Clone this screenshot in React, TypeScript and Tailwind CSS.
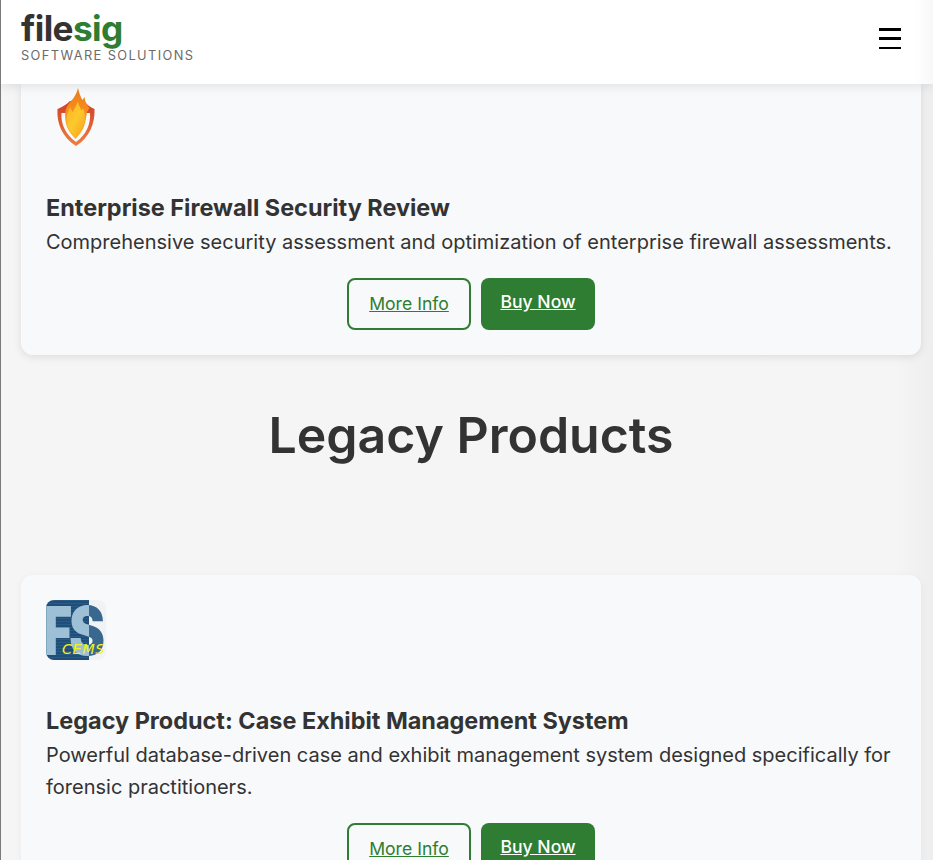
const font = { fontFamily: 'Inter, "Liberation Sans", sans-serif' };

function FlameShield() {
    return (
        <svg width="60" height="60" viewBox="0 0 60 60" className="block">
            <defs>
                <linearGradient id="flame" x1="0" y1="0" x2="0" y2="1">
                    <stop offset="0" stopColor="#ee7d1d" />
                    <stop offset="0.5" stopColor="#f58f1e" />
                    <stop offset="1" stopColor="#fbb321" />
                </linearGradient>
                <linearGradient id="core" x1="0" y1="0" x2="1" y2="1">
                    <stop offset="0" stopColor="#fbb024" />
                    <stop offset="0.5" stopColor="#fdc92c" />
                    <stop offset="1" stopColor="#f8a01f" />
                </linearGradient>
                <linearGradient id="rim" x1="0" y1="0" x2="0" y2="1">
                    <stop offset="0" stopColor="#cf3d28" />
                    <stop offset="1" stopColor="#ef7f3e" />
                </linearGradient>
            </defs>
            <path d="M11.500 22 C16 20 20 18 24 14 L38 14 C41 18 45 20.500 48.500 22 C49 36 44 50 30 59 C16 50 10.500 36 11.500 22 Z" fill="url(#rim)" />
            <path d="M15.500 26 L44 26 C45 37 40 48 30 55 C20 48 14.500 37 15.500 26 Z" fill="#f8f9fa" />
            <path d="M32 1 C33 5 34 9 36.500 13 L38.500 10 C39 15 41 18 43.500 21 L41 25 L39.500 34 C38 42 34 47 29.500 52 C25 47 20 41 19.500 33 C19 29 19 25 20 22 C21 19 23 16 25 14 C28 11 31 6 32 1 Z" fill="url(#flame)" />
            <path d="M32 14 C32 18 35 21 35.500 24 L37 21 C39 26 39.500 30 39 33 C38 40 34 46 29.500 50 C25 46 20.500 40 20.500 33 C20.500 28 22 24 24.500 20 C25 23 26 24 27 25 C28 21 31 18 32 14 Z" fill="url(#core)" />
        </svg>
    );
}

function CemsLogo() {
    return (
        <svg width="60" height="60" viewBox="0 0 60 60" className="block">
            <defs>
                <pattern id="scan" width="3" height="3" patternUnits="userSpaceOnUse">
                    <rect width="3" height="3" fill="#1f4e79" />
                    <rect width="3" height="1" fill="#2a5a85" />
                </pattern>
                <linearGradient id="split" gradientUnits="userSpaceOnUse" x1="0" y1="0" x2="60" y2="0">
                    <stop offset="0.717" stopColor="#9dc0d6" />
                    <stop offset="0.717" stopColor="#3a678e" />
                </linearGradient>
            </defs>
            <path d="M8 0 H43 V60 H8 A8 8 0 0 1 0 52 V8 A8 8 0 0 1 8 0 Z" fill="url(#scan)" />
            <path d="M43 0 H52 A8 8 0 0 1 60 8 V52 A8 8 0 0 1 52 60 H43 Z" fill="#f0f3f5" />
            <text transform="translate(-2 55) scale(0.72 1)" fontSize="67" fontWeight="900" fill="#9dc0d6" style={font}>
                F
            </text>
            <text x="23" y="55" fontSize="68" fontWeight="900" fill="url(#split)" textLength="36" lengthAdjust="spacingAndGlyphs" style={font}>
                S
            </text>
            <text x="16" y="54" fontSize="14.500" fontStyle="italic" fill="#f2f21a" letterSpacing="0.500" style={{ fontFamily: '"DejaVu Sans", sans-serif' }}>
                CEMS
            </text>
        </svg>
    );
}

function Actions() {
    return (
        <div className="flex items-start justify-center gap-[10px]">
            <a href="#" className="flex h-[52px] w-[124px] items-center justify-center rounded-[8px] border-2 border-[#2e7d32] text-[17.6px] text-[#2e7d32] underline">
                More Info
            </a>
            <a href="#" className="flex h-[52px] w-[114px] items-start justify-center rounded-[8px] bg-[#2e7d32] pt-[11px] text-[17.6px] leading-[25px] font-medium text-white underline">
                Buy Now
            </a>
        </div>
    );
}

export default function App() {
    return (
        <div className="relative h-[860px] w-[933px] overflow-hidden border-l border-[#7a7a7a] bg-gradient-to-r from-[#f5f5f5] from-[96%] to-[#eeeeee] text-[#333333]" style={font}>
            <header className="relative z-10 flex h-[84px] items-start justify-between bg-gradient-to-r from-white from-[98%] to-[#f8f8f8] pt-[10px] pr-[32px] pl-[20px] shadow-[0_2px_10px_rgba(0,0,0,0.1)]">
                <div>
                    <div className="text-[35.2px] leading-[36px] font-bold tracking-[-0.6px]">
                        file<span className="text-[#2e7d32]">sig</span>
                    </div>
                    <div className="mt-[2px] text-[12.8px] leading-[16px] tracking-[1.4px] text-[#6b6b6b]">SOFTWARE SOLUTIONS</div>
                </div>
                <div className="mt-[18px] flex w-[22px] flex-col gap-[6.500px]">
                    <span className="h-[2.750px] bg-black" />
                    <span className="h-[2.750px] bg-black" />
                    <span className="h-[2.750px] bg-black" />
                </div>
            </header>

            <main className="pr-[12px] pl-[20px]">
                <section className="rounded-b-[12px] bg-[#f8f9fa] px-[25px] pt-[3px] pb-[25px] shadow-[0_2px_8px_rgba(0,0,0,0.1)]">
                    <FlameShield />
                    <h3 className="mt-[46px] text-[23.45px] leading-[30px] font-bold">Enterprise Firewall Security Review</h3>
                    <p className="mt-[3px] text-[20px] leading-[32px] whitespace-nowrap">Comprehensive security assessment and optimization of enterprise firewall assessments.</p>
                    <div className="mt-[20px]">
                        <Actions />
                    </div>
                </section>

                <h2 className="mt-[46px] text-center text-[50px] leading-[68px] font-semibold">Legacy Products</h2>

                <section className="mt-[106px] rounded-[12px] bg-[#f8f9fa] p-[25px] shadow-[0_2px_8px_rgba(0,0,0,0.05)]">
                    <CemsLogo />
                    <h3 className="mt-[46px] text-[23.45px] leading-[30px] font-bold">Legacy Product: Case Exhibit Management System</h3>
                    <p className="mt-[3px] text-[20px] leading-[32px]">Powerful database-driven case and exhibit management system designed specifically for forensic practitioners.</p>
                    <div className="mt-[20px]">
                        <Actions />
                    </div>
                </section>
            </main>
        </div>
    );
}
